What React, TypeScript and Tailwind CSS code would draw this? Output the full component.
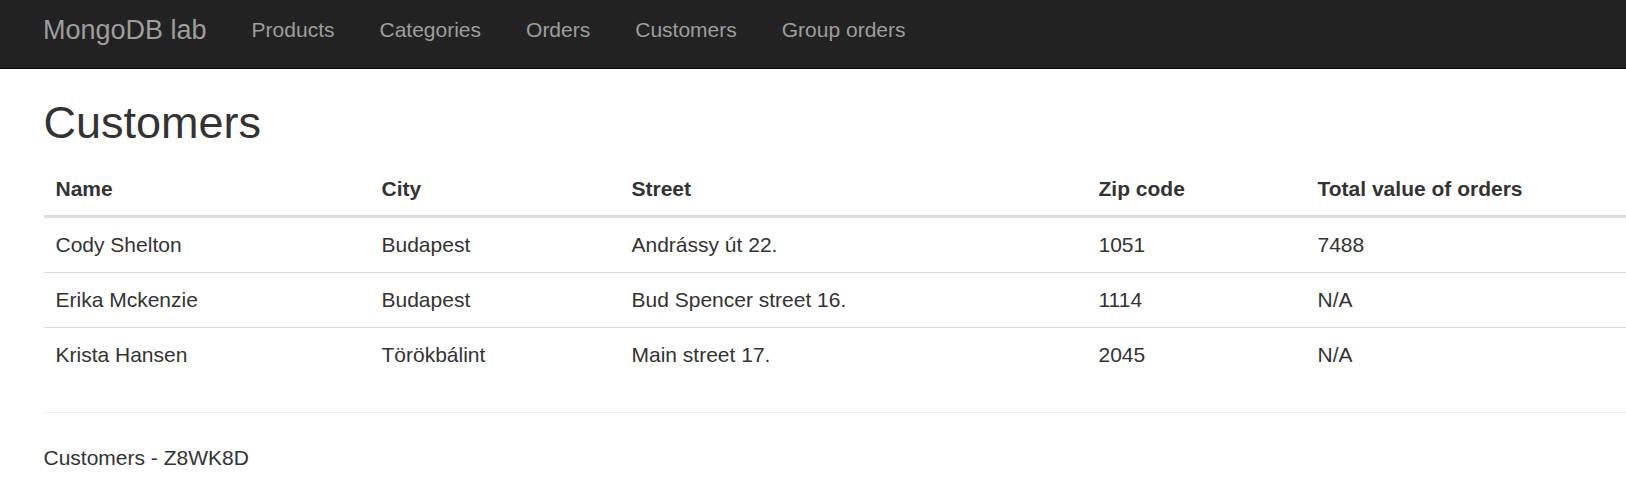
type Customer = {
  name: string;
  city: string;
  street: string;
  zip: string;
  total: string;
};

const navLinks = ["Products", "Categories", "Orders", "Customers", "Group orders"];

const customers: Customer[] = [
  { name: "Cody Shelton", city: "Budapest", street: "Andrássy út 22.", zip: "1051", total: "7488" },
  { name: "Erika Mckenzie", city: "Budapest", street: "Bud Spencer street 16.", zip: "1114", total: "N/A" },
  { name: "Krista Hansen", city: "Törökbálint", street: "Main street 17.", zip: "2045", total: "N/A" },
];

export default function App() {
  return (
    <div className="min-h-screen bg-white text-[#333] font-['Liberation_Sans',Arial,sans-serif] text-[21px] leading-[30px]">
      {/* Navbar */}
      <nav className="h-[69px] bg-[#222] border-b border-[#080808]">
        <div className="flex items-start gap-[45px] pl-[43px] pt-[15px]">
          <a className="text-[27px] leading-[30px] text-[#9d9d9d]">MongoDB lab</a>
          {navLinks.map((link) => (
            <a key={link} className="text-[21px] leading-[30px] text-[#9d9d9d]">
              {link}
            </a>
          ))}
        </div>
      </nav>

      <div className="pl-[43.5px] pt-[29px]">
        <h2 className="text-[45px] leading-[49.5px] font-normal mb-[14px]">Customers</h2>

        {/* Customers table */}
        <table className="w-full table-fixed border-collapse mb-[30px]">
          <colgroup>
            <col className="w-[326px]" />
            <col className="w-[250px]" />
            <col className="w-[467px]" />
            <col className="w-[219px]" />
            <col />
          </colgroup>
          <thead>
            <tr>
              {["Name", "City", "Street", "Zip code", "Total value of orders"].map((h) => (
                <th
                  key={h}
                  className="text-left font-bold px-[12px] pt-[12px] pb-[11px] border-b-[3px] border-[#ddd] align-bottom"
                >
                  {h}
                </th>
              ))}
            </tr>
          </thead>
          <tbody>
            {customers.map((c, i) => (
              <tr key={c.name} className={i > 0 ? "border-t border-[#ddd]" : ""}>
                <td className="px-[12px] py-[12px]">{c.name}</td>
                <td className="px-[12px] py-[12px]">{c.city}</td>
                <td className="px-[12px] py-[12px]">{c.street}</td>
                <td className="px-[12px] py-[12px]">{c.zip}</td>
                <td className="px-[12px] py-[12px]">{c.total}</td>
              </tr>
            ))}
          </tbody>
        </table>

        <hr className="border-0 border-t-[1.5px] border-[#eee] mb-[30px]" />

        <footer>
          <p>Customers - Z8WK8D</p>
        </footer>
      </div>
    </div>
  );
}
